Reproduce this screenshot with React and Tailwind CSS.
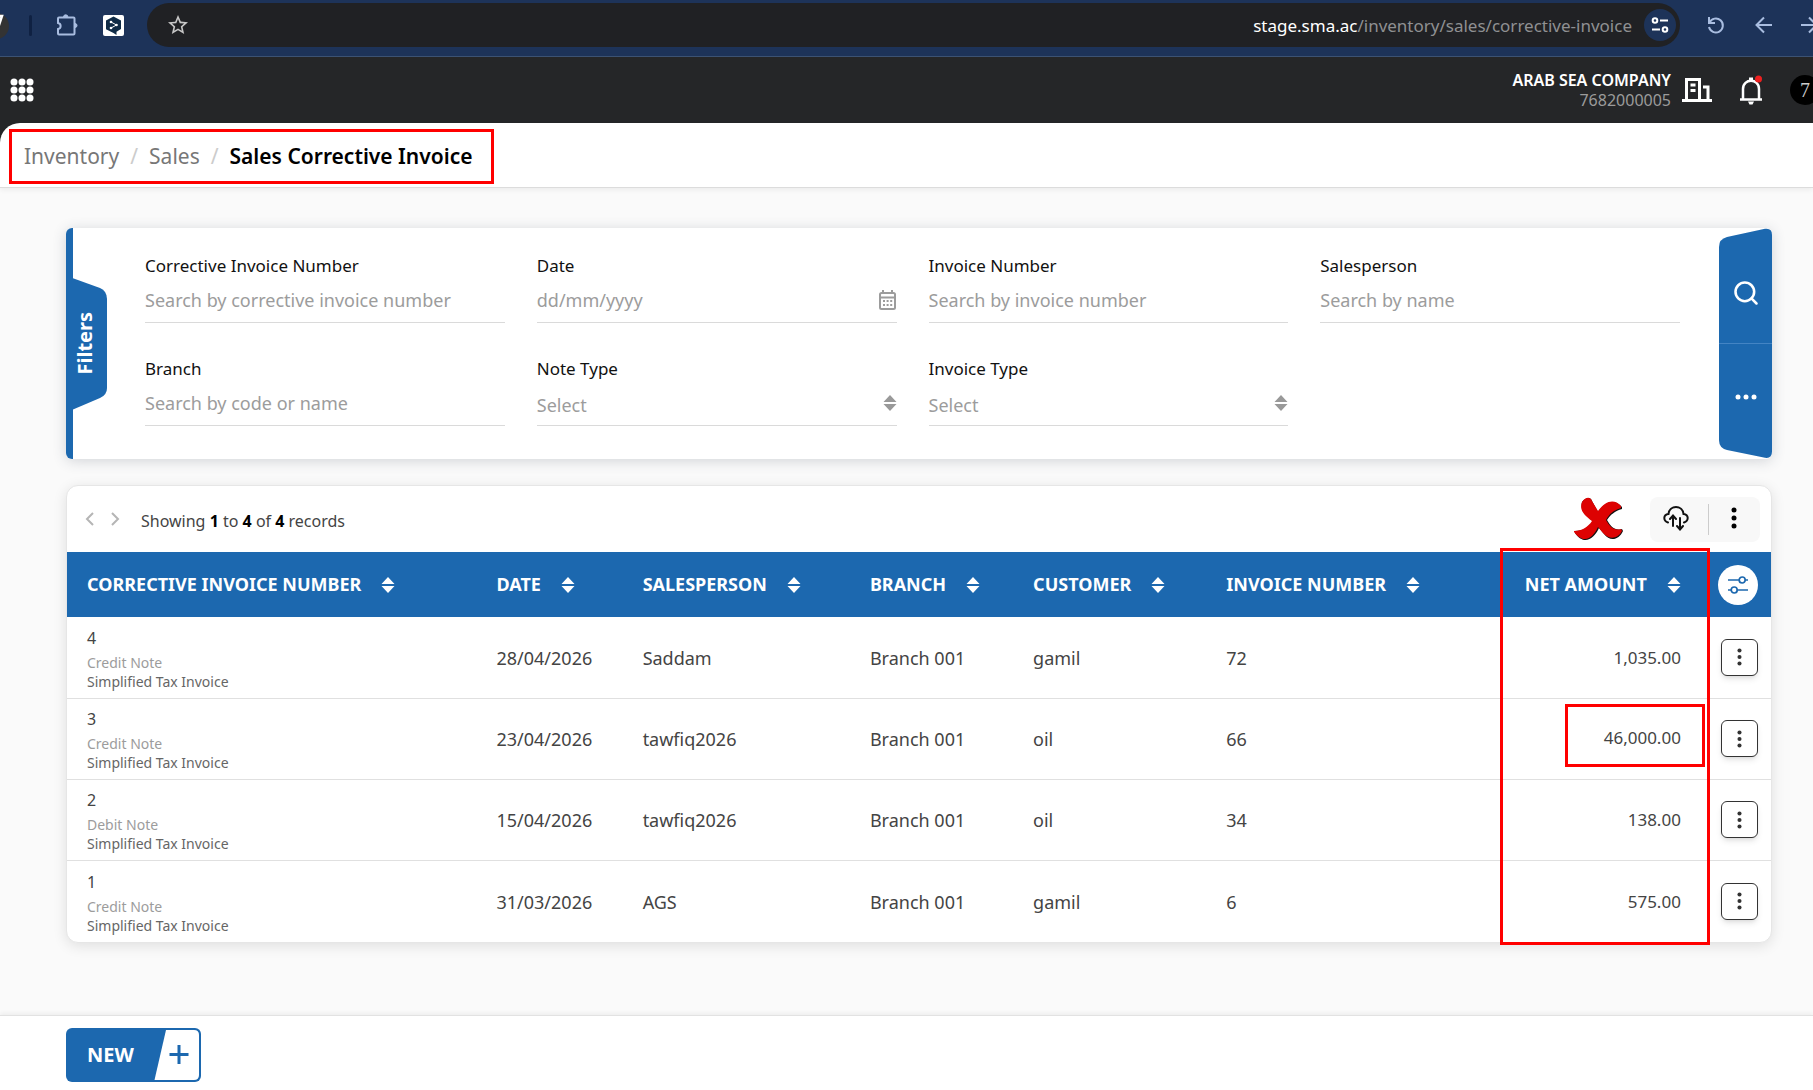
import React from 'react';
import { Search } from 'lucide-react';

const filters = [
  { id: 'corrective-number', label: 'Corrective Invoice Number', placeholder: 'Search by corrective invoice number' },
  { id: 'date', label: 'Date', placeholder: 'dd/mm/yyyy', type: 'date' },
  { id: 'invoice-number', label: 'Invoice Number', placeholder: 'Search by invoice number' },
  { id: 'salesperson', label: 'Salesperson', placeholder: 'Search by name' },
  { id: 'branch', label: 'Branch', placeholder: 'Search by code or name' },
  { id: 'note-type', label: 'Note Type', placeholder: 'Select', type: 'select' },
  { id: 'invoice-type', label: 'Invoice Type', placeholder: 'Select', type: 'select' },
];

const columns = [
  { label: 'Corrective Invoice Number', width: 'w-[409px]' },
  { label: 'Date', width: 'w-[146px]' },
  { label: 'Salesperson', width: 'w-[227px]' },
  { label: 'Branch', width: 'w-[163px]' },
  { label: 'Customer', width: 'w-[193px]' },
  { label: 'Invoice Number', width: 'w-[293px]' },
];

const rows = [
  { number: 4, note: 'Credit Note', date: '28/04/2026', person: 'Saddam', customer: 'gamil', invoice: 72, net: '1,035.00' },
  { number: 3, note: 'Credit Note', date: '23/04/2026', person: 'tawfiq2026', customer: 'oil', invoice: 66, net: '46,000.00', flagged: true },
  { number: 2, note: 'Debit Note', date: '15/04/2026', person: 'tawfiq2026', customer: 'oil', invoice: 34, net: '138.00' },
  { number: 1, note: 'Credit Note', date: '31/03/2026', person: 'AGS', customer: 'gamil', invoice: 6, net: '575.00' },
];

function SortIcon({ className }) {
  return (
    <svg viewBox="0 0 14 16" className={className} fill="currentColor" aria-hidden="true">
      <path d="M7 0l6.500 7H.5zM7 16l6.500-7H.5z" />
    </svg>
  );
}

function DotsIcon({ className }) {
  return (
    <svg viewBox="0 0 6 22" className={className} fill="currentColor" aria-hidden="true">
      <circle cx="3" cy="3" r="2.5" />
      <circle cx="3" cy="11" r="2.5" />
      <circle cx="3" cy="19" r="2.5" />
    </svg>
  );
}

function BrowserBar() {
  return (
    <div className="flex h-[57px] items-start overflow-hidden border-b border-[#3c5273] bg-[#1d3359] pt-[3px]">
      <div className="flex h-11 w-[147px] shrink-0 items-center">
        <svg viewBox="0 0 9 28" className="h-7 w-[9px]" aria-hidden="true">
          <circle cx="-4" cy="15" r="13" fill="#333" />
          <path d="M0 5h2L-2 17" stroke="#fff" strokeWidth="2.5" fill="none" />
        </svg>
        <span className="ml-5 h-[21px] w-[3px] rounded bg-[#0f2142]" />
        <button type="button" aria-label="Extensions" className="ml-6 text-[#a9bde0]">
          <svg viewBox="0 0 22 22" className="h-[22px] w-[22px]" fill="none" stroke="currentColor" strokeWidth="2" aria-hidden="true">
            <path d="M2 4.5q0-1 1-1h14.500q1 0 1 1v15q0 1-1 1H3q-1 0-1-1V15c3.500-.5 3.500-5.500 0-6z" />
            <path d="M7.500 3a2.200 2.200 0 0 1 4.400 0zM19 9.500a2 2 0 0 1 0 4z" fill="currentColor" strokeWidth="1" />
          </svg>
        </button>
        <button type="button" aria-label="Translator" className="ml-[25px]">
          <svg viewBox="0 0 21 21" className="h-[21px] w-[21px]" aria-hidden="true">
            <rect width="21" height="21" rx="2" fill="#fff" />
            <path d="M10.500 1.500L18 5.500v8.500l-4.500 2.800V20l-3-2L3 14.200V5.500z" fill="#0f2b46" />
            <path d="M8 7l5.500 3L8 13" stroke="#fff" fill="none" />
            <circle cx="8" cy="7" r="1.300" fill="#fff" />
            <circle cx="13.500" cy="10" r="1.300" fill="#fff" />
            <circle cx="8" cy="13" r="1.300" fill="#fff" />
          </svg>
        </button>
      </div>
      <div className="flex h-11 flex-1 items-center justify-between rounded-full bg-[#202124] pr-1 pl-[19px]">
        <button type="button" aria-label="Bookmark this page" className="text-[#c7c7c7]">
          <svg viewBox="0 0 24 24" className="h-6 w-6" fill="currentColor" aria-hidden="true">
            <path d="M22 9.240l-7.190-.62L12 2 9.190 8.630 2 9.240l5.460 4.730L5.820 21 12 17.270 18.180 21l-1.630-7.030L22 9.240zM12 15.400l-3.760 2.270 1-4.280-3.320-2.880 4.380-.38L12 6.100l1.710 4.040 4.380.38-3.320 2.880 1 4.280L12 15.400z" />
          </svg>
        </button>
        <div className="flex items-center gap-3">
          <p className="pt-px text-[17px] text-[#8f9092]">
            <span className="text-white">stage.sma.ac</span>/inventory/sales/corrective-invoice
          </p>
          <button type="button" aria-label="Site settings" className="flex h-8 w-8 items-center justify-center rounded-full bg-[#1d3359] text-white">
            <svg viewBox="0 0 18 18" className="h-[18px] w-[18px]" fill="none" stroke="currentColor" strokeWidth="2" aria-hidden="true">
              <circle cx="4" cy="4.500" r="2.300" />
              <circle cx="14" cy="13.500" r="2.300" />
              <path d="M9 4.500h8M1 13.500h8" />
            </svg>
          </button>
        </div>
      </div>
      <div className="flex h-11 w-[133px] shrink-0 items-center gap-6 overflow-hidden pl-6 text-[#a9bde0]">
        <button type="button" aria-label="Reload" className="shrink-0">
          <svg viewBox="0 0 24 24" className="h-6 w-6" fill="none" stroke="currentColor" strokeWidth="2" aria-hidden="true">
            <path d="M5 4v6h6M5.500 9.500A7 7 0 1 1 5 14" />
          </svg>
        </button>
        <button type="button" aria-label="Next" className="shrink-0">
          <svg viewBox="0 0 24 24" className="h-6 w-6" fill="none" stroke="currentColor" strokeWidth="2" aria-hidden="true">
            <path d="M20 12H5M12 4.500L4.500 12l7.500 7.500" />
          </svg>
        </button>
        <button type="button" aria-label="Previous" className="shrink-0">
          <svg viewBox="0 0 24 24" className="h-6 w-6" fill="none" stroke="currentColor" strokeWidth="2" aria-hidden="true">
            <path d="M1 12h15M9 4.500l7.500 7.500L9 19.500" />
          </svg>
        </button>
      </div>
    </div>
  );
}

function AppHeader() {
  return (
    <header className="flex h-[66px] items-center justify-between overflow-hidden bg-[#252628] pl-[10px]">
      <button type="button" aria-label="Applications" className="text-white">
        <svg viewBox="0 0 24 24" className="h-6 w-6" fill="currentColor" aria-hidden="true">
          {[4, 12, 20].map((y) => [4, 12, 20].map((x) => <circle key={`${x}-${y}`} cx={x} cy={y} r="3.500" />))}
        </svg>
      </button>
      <div className="flex items-center text-white">
        <div className="text-right">
          <p className="text-base leading-5 font-semibold">ARAB SEA COMPANY</p>
          <p className="text-base leading-5 text-[#9b9b9b]">7682000005</p>
        </div>
        <svg viewBox="0 0 30 26" className="ml-[11px] h-[26px] w-[30px]" fill="none" stroke="currentColor" strokeWidth="3" aria-hidden="true">
          <path d="M0 23.500h30M4.500 23V2.500h13V23M21 10h5v13M8.500 8h5M8.500 13.500h5" />
        </svg>
        <button type="button" aria-label="Notifications" className="ml-[27px]">
          <svg viewBox="0 0 24 30" className="h-[30px] w-6" aria-hidden="true">
            <path d="M1 24.500h22M4 24V14c0-11 16-11 16 0v10" fill="none" stroke="currentColor" strokeWidth="2.500" />
            <path d="M9 26.500h6l-1.500 3h-3zM10 2.500h4v3h-4z" fill="currentColor" />
            <circle cx="19.500" cy="4" r="3.500" fill="#ee2020" />
          </svg>
        </button>
        <div className="ml-[27px] w-[23px] overflow-hidden">
          <div className="flex h-[30px] w-[30px] items-center justify-center rounded-full bg-black font-['Liberation_Serif',serif] text-xl text-[#ccc]">7</div>
        </div>
      </div>
    </header>
  );
}

function Breadcrumbs() {
  return (
    <div className="bg-[#252628]">
      <div className="relative z-10 flex h-[65px] items-start rounded-tl-[20px] border-b border-[#dcdcdc] bg-white pt-[6px] pl-[9px] shadow-[0_2px_5px_rgba(0,0,0,0.06)]">
        <nav aria-label="Breadcrumb" className="flex h-[55px] items-center gap-[11px] border-3 border-[#ff0000] pr-[19px] pl-3 text-[21px] text-[#777]">
          <a href="#inventory">Inventory</a>
          <span className="text-[#ccc]">/</span>
          <a href="#sales">Sales</a>
          <span className="text-[#ccc]">/</span>
          <span className="font-semibold text-black">Sales Corrective Invoice</span>
        </nav>
      </div>
    </div>
  );
}

function Field({ field }) {
  const { id, label, placeholder, type } = field;
  return (
    <div className="flex flex-col">
      <label htmlFor={id} className="text-[17px] leading-6 text-[#111]">{label}</label>
      <div className="mt-[10px] flex h-[35px] items-start border-b border-[#dadada] text-[#9c9c9c]">
        {type === 'select' ? (
          <>
            <select id={id} className="h-7 min-w-0 flex-1 appearance-none bg-transparent text-[18px] outline-none">
              <option>{placeholder}</option>
            </select>
            <SortIcon className="mt-1 h-4 w-[14px] text-[#999]" />
          </>
        ) : (
          <input
            id={id}
            type="text"
            placeholder={placeholder}
            className="h-6 min-w-0 flex-1 bg-transparent text-[18px] outline-none placeholder:text-[#9c9c9c]"
          />
        )}
        {type === 'date' && (
          <svg viewBox="0 0 18 20" className="mt-[2px] h-5 w-[18px]" fill="none" stroke="currentColor" strokeWidth="2" aria-hidden="true">
            <rect x="1" y="3" width="15" height="16" rx="1.500" />
            <path d="M1 7.500h15M4 0v3M13 0v3" />
            <path d="M4 11h9.500M4 15h9.500" strokeDasharray="2 1.600" />
          </svg>
        )}
      </div>
    </div>
  );
}

function FilterPanel() {
  return (
    <section aria-label="Filters" className="flex rounded-md bg-white shadow-[0_2px_14px_rgba(50,60,80,0.2)]">
      <div className="w-[7px] rounded-l-md bg-[#1c68af]" />
      <div className="relative flex h-[132px] w-[34px] items-center justify-start self-center">
        <svg viewBox="0 0 34 132" className="absolute inset-0 h-full w-full" fill="#1c68af" aria-hidden="true">
          <path d="M-1 0L27 10Q34 13 34 21v89q0 7-7 10L-1 132z" />
        </svg>
        <h2 className="relative rotate-180 text-xl leading-6 font-bold text-white [writing-mode:vertical-rl]">Filters</h2>
      </div>
      <form className="grid flex-1 grid-cols-4 gap-x-8 gap-y-[34px] pt-[26px] pr-[39px] pb-[33px] pl-[38px]">
        {filters.map((field) => (
          <Field key={field.id} field={field} />
        ))}
      </form>
      <div className="relative grid w-[53px] grid-rows-2 text-white">
        <svg viewBox="0 0 53 231" preserveAspectRatio="none" className="absolute inset-0 h-full w-full" fill="#1c68af" aria-hidden="true">
          <path d="M0 19q0-8 8-10L46 .8q7-1 7 6v217q0 7-7 6L8 222q-8-2-8-10z" />
        </svg>
        <button type="button" aria-label="Search" className="relative flex items-center justify-center border-b border-[#4384c4] pt-4">
          <Search className="h-7 w-7" strokeWidth={2.2} />
        </button>
        <button type="button" aria-label="More filters" className="relative flex items-center justify-center pb-2">
          <DotsIcon className="h-[22px] w-[6px] rotate-90" />
        </button>
      </div>
    </section>
  );
}

function TableToolbar() {
  return (
    <div className="flex h-[66px] items-center justify-between pr-[11px] pl-[17px]">
      <div className="flex items-center">
        <div className="flex gap-[13px] text-[#b5b5b5]">
          <button type="button" aria-label="Previous page">
            <svg viewBox="0 0 12 16" className="h-4 w-3" fill="none" stroke="currentColor" strokeWidth="2" aria-hidden="true">
              <path d="M9 2L3 8l6 6" />
            </svg>
          </button>
          <button type="button" aria-label="Next page">
            <svg viewBox="0 0 12 16" className="h-4 w-3" fill="none" stroke="currentColor" strokeWidth="2" aria-hidden="true">
              <path d="M3 2l6 6-6 6" />
            </svg>
          </button>
        </div>
        <p className="ml-5 pt-1 text-base text-[#444]">
          Showing <b className="text-black">1</b> to <b className="text-black">4</b> of <b className="text-black">4</b> records
        </p>
      </div>
      <div className="flex items-center">
        <svg viewBox="0 0 50 45" className="mr-[26px] h-[45px] w-[50px]" aria-hidden="true">
          <path d="M8 5c4-5 9-5 10-1l6 11C31 5 40 1 48 10v2c-7 2-12 6-15 11 4 7 8 11 15 9l1 2c-4 9-13 11-19 3l-5-6C20 42 10 49 1 36v-2c8 0 14-4 18-10C11 18 6 13 8 5z" fill="#111" />
          <path d="M8 5c4-6 9-5 10-1l6 10C31 4 40 1 47 9v2c-7 2-12 6-15 12 4 7 8 11 15 9l1 2c-4 8-13 9-19 2l-5-6C19 41 10 48 0 35v-1c8 0 14-4 18-10C10 18 5 13 8 5z" fill="#dd0202" />
        </svg>
        <div className="flex h-[45px] w-[110px] items-center rounded-lg bg-[#f8f8f8]">
          <button type="button" aria-label="Sync" className="flex w-[59px] justify-center border-r border-[#ccc] pt-px pr-[6px] pb-1">
            <svg viewBox="0 0 26 26" className="h-[26px] w-[26px]" fill="none" stroke="#111" strokeWidth="2" strokeLinecap="round" aria-hidden="true">
              <path d="M5 17.500C0 16 0 9.500 5.500 9c1-9.500 14-9.500 15 0 5.500.5 5.500 7 .5 8.500" />
              <path d="M10 21V11M7 14l3-3.500 3 3.500M17 13v11M14 21l3 3.500 3-3.500" />
            </svg>
          </button>
          <button type="button" aria-label="More options" className="flex flex-1 justify-center pr-px pb-[2px]">
            <DotsIcon className="h-[22px] w-[6px] text-black" />
          </button>
        </div>
      </div>
    </div>
  );
}

function HeaderCell({ label, className }) {
  return (
    <th scope="col" className={className}>
      <button type="button" className="inline-flex items-center gap-5 whitespace-nowrap uppercase">
        {label}
        <SortIcon className="h-4 w-[14px]" />
      </button>
    </th>
  );
}

function InvoiceTable() {
  return (
    <section className="mt-[26px] rounded-xl border border-[#e6e6e6] bg-white shadow-[0_3px_14px_rgba(0,0,0,0.11)]">
      <TableToolbar />
      <table className="w-full table-fixed text-left text-[18px] text-[#444]">
        <thead>
          <tr className="h-[65px] bg-[#1c68af] text-white">
            {columns.map((column) => (
              <HeaderCell key={column.label} label={column.label} className={`${column.width} pl-5 font-bold`} />
            ))}
            {/* outline round the whole net amount column */}
            <HeaderCell label="Net Amount" className="relative w-[210px] pr-[29px] text-right font-bold after:pointer-events-none after:absolute after:-top-[4px] after:left-0 after:h-[397px] after:w-full after:border-3 after:border-[#ff0000]" />
            <th scope="col" className="w-[61px]">
              <button type="button" aria-label="Column settings" className="ml-2 flex h-10 w-10 items-center justify-center rounded-full bg-white text-[#1c68af]">
                <svg viewBox="0 0 20 18" className="h-[18px] w-5" fill="none" stroke="currentColor" strokeWidth="1.700" aria-hidden="true">
                  <path d="M0 4h11M17.500 4H20M0 14h3M9.500 14H20" />
                  <circle cx="14.200" cy="4" r="3" />
                  <circle cx="6.200" cy="14" r="3" />
                </svg>
              </button>
            </th>
          </tr>
        </thead>
        <tbody>
          {rows.map((row) => (
            <tr key={row.number} className="h-[81px] border-b border-[#e0e0e0] last:h-[82px] last:border-b-0">
              <td className="pl-5">
                <p className="text-base leading-6">{row.number}</p>
                <p className="text-sm leading-[25px] text-[#9c9c9c]">{row.note}</p>
                <p className="text-sm leading-[14px] text-[#666]">Simplified Tax Invoice</p>
              </td>
              <td className="pt-[2px] pl-5">{row.date}</td>
              <td className="pt-[2px] pl-5">{row.person}</td>
              <td className="pt-[2px] pl-5">Branch 001</td>
              <td className="pt-[2px] pl-5">{row.customer}</td>
              <td className="pt-[2px] pl-5">{row.invoice}</td>
              <td className="text-right text-[17px]">
                {row.flagged ? (
                  <span className="mr-[5px] mb-[7px] ml-auto flex h-[63px] w-[140px] items-center justify-end border-3 border-[#ff0000] pt-[6px] pr-[21px]">{row.net}</span>
                ) : (
                  <span className="pr-[29px]">{row.net}</span>
                )}
              </td>
              <td>
                <button type="button" aria-label={`Actions for invoice ${row.number}`} className="ml-[11px] flex h-[37px] w-[37px] items-center justify-center rounded-md border border-[#333] bg-white text-[#333] shadow-md">
                  <DotsIcon className="h-[18px] w-[5px]" />
                </button>
              </td>
            </tr>
          ))}
        </tbody>
      </table>
    </section>
  );
}

function App() {
  return (
    <div className="flex min-h-screen flex-col bg-[#fafafa] font-['Noto_Sans',sans-serif]">
      <BrowserBar />
      <AppHeader />
      <Breadcrumbs />
      <main className="flex-1 pt-10 pr-[41px] pb-10 pl-[66px]">
        <FilterPanel />
        <InvoiceTable />
      </main>
      <footer className="h-[75px] border-t border-[#e2e2e2] bg-white pt-3 pl-[66px] shadow-[0_-2px_4px_rgba(0,0,0,0.05)]">
        <button type="button" className="relative flex h-[54px] w-[135px] items-center rounded-md bg-[#1c68af] pl-[21px] text-xl font-bold text-white">
          NEW
          <svg viewBox="0 0 46 50" className="absolute top-[2px] right-[2px] h-[50px] w-[46px]" aria-hidden="true">
            <path d="M13 0H41q5 0 5 5v40q0 5-5 5H1.500z" fill="#fff" />
            <path d="M16.500 24.500h19M26 15v19" stroke="#1c68af" strokeWidth="3" />
          </svg>
        </button>
      </footer>
    </div>
  );
}

export default App;
